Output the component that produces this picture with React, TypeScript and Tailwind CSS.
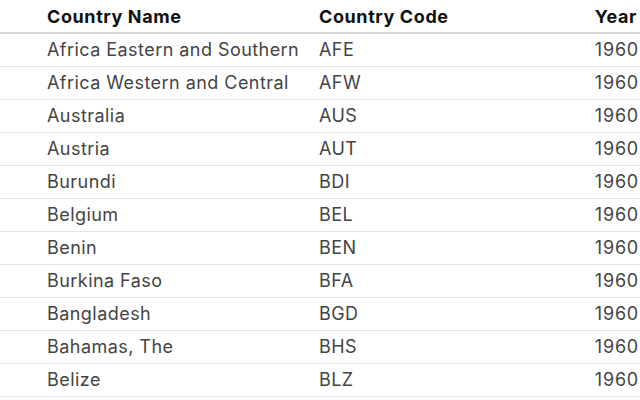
import React from "react";

type Row = { name: string; code: string; year: number };

const rows: Row[] = [
  { name: "Africa Eastern and Southern", code: "AFE", year: 1960 },
  { name: "Africa Western and Central", code: "AFW", year: 1960 },
  { name: "Australia", code: "AUS", year: 1960 },
  { name: "Austria", code: "AUT", year: 1960 },
  { name: "Burundi", code: "BDI", year: 1960 },
  { name: "Belgium", code: "BEL", year: 1960 },
  { name: "Benin", code: "BEN", year: 1960 },
  { name: "Burkina Faso", code: "BFA", year: 1960 },
  { name: "Bangladesh", code: "BGD", year: 1960 },
  { name: "Bahamas, The", code: "BHS", year: 1960 },
  { name: "Belize", code: "BLZ", year: 1960 },
];

export default function App() {
  return (
    <div className="h-[400px] w-[640px] overflow-hidden bg-white font-['Inter',sans-serif]">
      <table className="w-[640px] table-fixed border-collapse">
        <colgroup>
          <col className="w-[319px]" />
          <col className="w-[200px]" />
          <col />
        </colgroup>
        <thead>
          {/* header row: bold, thicker rule underneath */}
          <tr className="h-[33px] border-b-2 border-[#d4d4d4]">
            <th className="pl-[47px] text-left text-[18px] font-bold tracking-[0.6px] text-[#111]">
              Country Name
            </th>
            <th className="text-left text-[18px] font-bold tracking-[0.6px] text-[#111]">
              Country Code
            </th>
            <th className="pr-[3px] text-right text-[18px] font-bold tracking-[0.6px] text-[#111]">
              Year
            </th>
          </tr>
        </thead>
        <tbody>
          {rows.map((r) => (
            <tr key={r.code} className="h-[33px] border-b border-[#e6e6e6]">
              <td className="pl-[47px] text-[18px] tracking-[0.45px] text-[#444]">
                {r.name}
              </td>
              <td className="text-[18px] tracking-[0.45px] text-[#444]">{r.code}</td>
              <td className="pr-[1px] text-right text-[18px] tracking-[0.8px] text-[#444]">
                {r.year}
              </td>
            </tr>
          ))}
        </tbody>
      </table>
    </div>
  );
}
